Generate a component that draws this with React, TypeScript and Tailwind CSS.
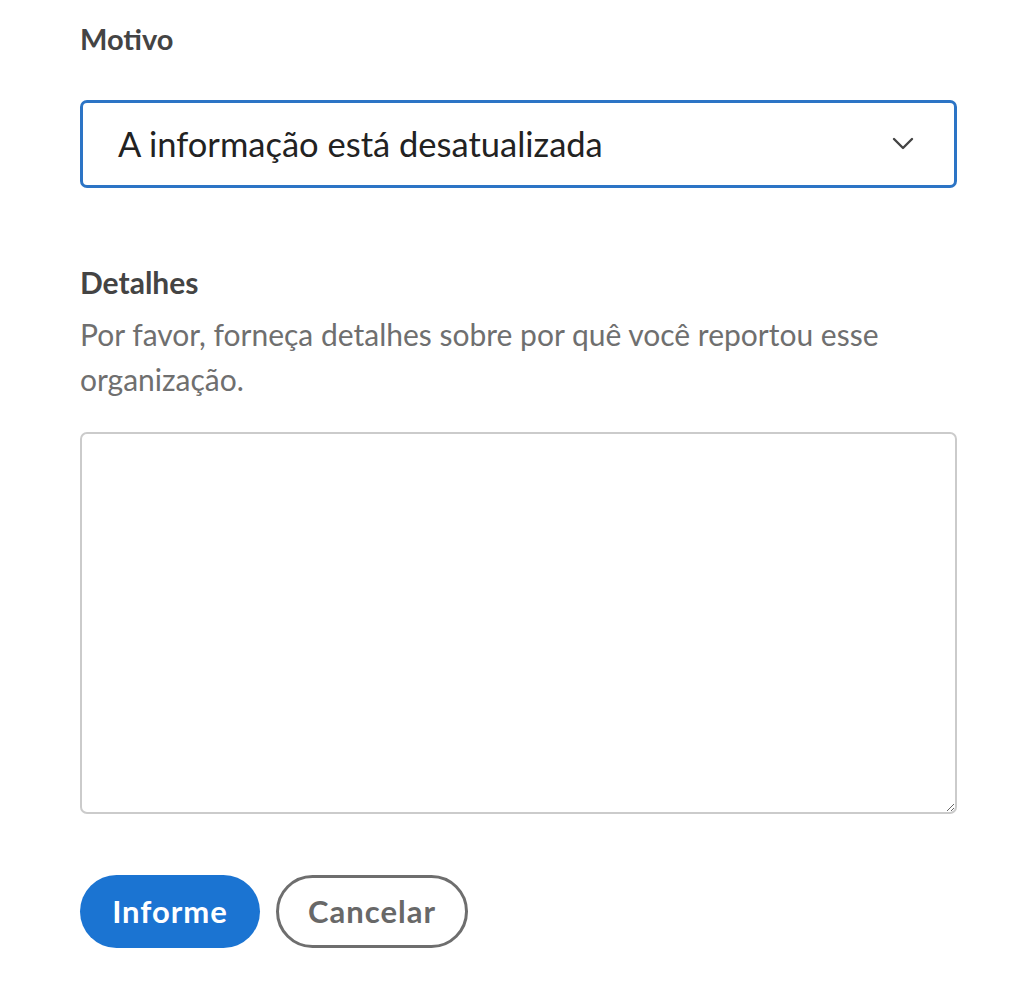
export default function App() {
  return (
    <div className="min-h-[997px] w-[1021px] bg-white font-['Lato',sans-serif]">
      <div className="pl-[80px] pr-[64px] pt-[21px]">
        <label className="block text-[29px] font-bold leading-[36px] text-[#444]">Motivo</label>

        <div className="mt-[43px] flex h-[88px] items-center justify-between rounded-[7px] border-[3px] border-[#2c74c5] pl-[35px] pr-[40px]">
          <span className="text-[34.5px] text-[#222]">A informação está desatualizada</span>
          <svg width="22" height="14" viewBox="0 0 22 14" fill="none">
            <path d="M2 2l9 9 9-9" stroke="#444" strokeWidth="2.4" strokeLinecap="round" strokeLinejoin="round" />
          </svg>
        </div>

        <label className="mt-[76px] block text-[30px] font-bold leading-[36px] text-[#444]">Detalhes</label>
        <p className="mt-[12px] text-[30px] leading-[45px] text-[#6f6f6f]">
          Por favor, forneça detalhes sobre por quê você reportou esse organização.
        </p>

        <textarea className="mt-[30px] block h-[382px] w-full resize-y rounded-[7px] border-2 border-[#cbcbcb] p-3 text-[28px] outline-none" />

        <div className="mt-[61px] flex gap-[16px]">
          <button className="h-[73px] w-[180px] rounded-full bg-[#1b74d2] text-[31px] font-bold tracking-[1px] text-white">
            Informe
          </button>
          <button className="h-[73px] w-[192px] rounded-full border-[3px] border-[#6e6e6e] bg-white text-[31px] font-bold tracking-[1px] text-[#686868]">
            Cancelar
          </button>
        </div>
      </div>
    </div>
  );
}
